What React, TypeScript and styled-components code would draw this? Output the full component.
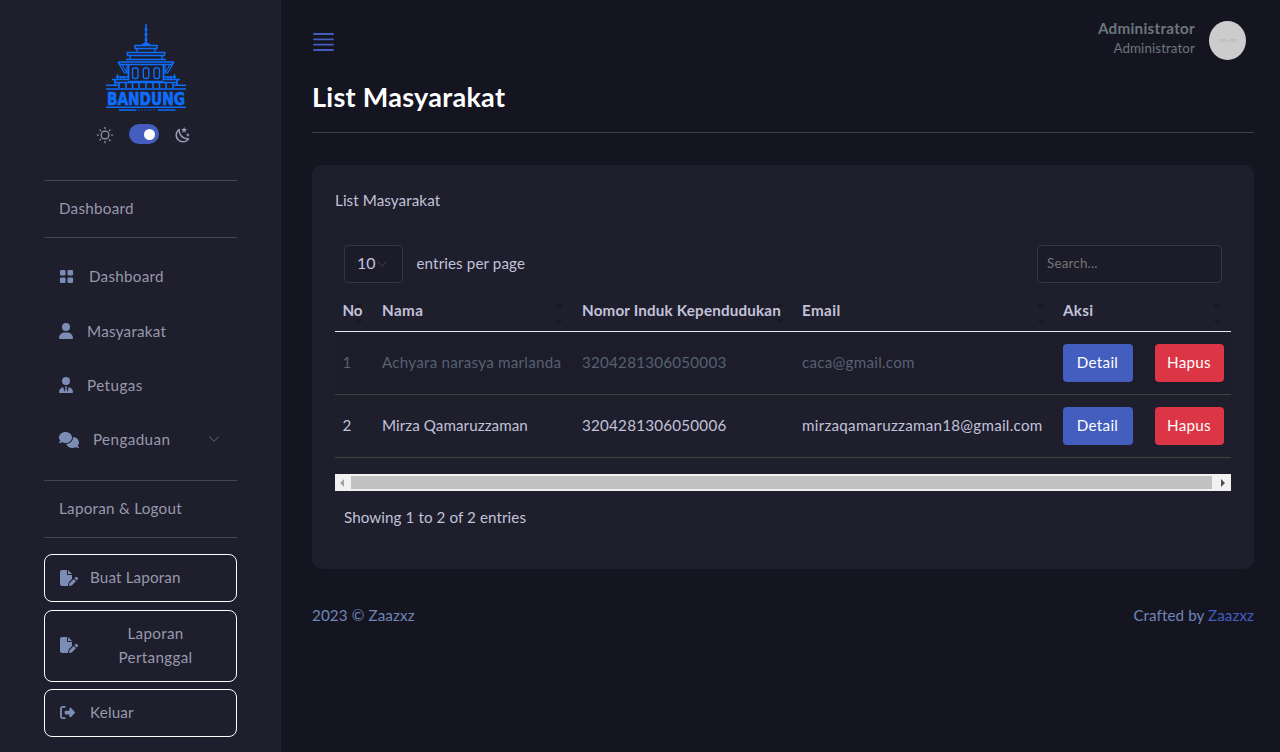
import React from "react";
import styled, { createGlobalStyle } from "styled-components";
import { BsGridFill, BsChevronDown } from "react-icons/bs";
import { FaUser, FaUserTie, FaComments, FaFilePen, FaRightFromBracket } from "react-icons/fa6";

const Global = createGlobalStyle`
  *, *::before, *::after { box-sizing: border-box; }
  html, body { margin: 0; height: 100%; background: #151521; overflow: hidden; }
  body { font-family: Lato, "Noto Sans", sans-serif; font-size: 15.2px; line-height: 24px; color: #c2c2d9; }
  button, input { font-family: inherit; }
`;

const Page = styled.div`
  display: flex;
  height: 752px;
`;

const Sidebar = styled.aside`
  width: 281px;
  flex: none;
  background: #1e1e2d;
  padding: 24px 44px 0;
  display: flex;
  flex-direction: column;
`;

const Brand = styled.div`
  height: 88px;
  padding-left: 62px;
  svg { display: block; overflow: visible; }
`;

const ThemeRow = styled.div`
  display: flex;
  align-items: center;
  height: 20px;
  margin: 12px 0 36px;
  padding-left: 52px;
  color: #9a9ab0;
  svg { display: block; margin-top: 2px; }
`;

const Switch = styled.span`
  width: 30px;
  height: 20px;
  border-radius: 10px;
  background: #435ebe;
  margin: 0 15px;
  display: flex;
  align-items: center;
  justify-content: flex-end;
  padding: 0 4px;
  &::after {
    content: "";
    width: 11px;
    height: 11px;
    border-radius: 50%;
    background: #fff;
  }
`;

const Txt = styled.span<{ $ls?: number }>`
  letter-spacing: ${(p) => (p.$ls ?? 0) - 0.1}px;
  margin-bottom: 2px;
  white-space: nowrap;
`;

const Section = styled.div`
  height: 58px;
  border-top: 1px solid #45454f;
  border-bottom: 1px solid #45454f;
  padding: 0 15px;
  display: flex;
  align-items: center;
  color: #9899ac;
`;

const Menu = styled.nav`
  padding: 12px 0 13px;
  height: 242px;
`;

const Glyph = styled.span<{ $w: number; $h: number }>`
  display: flex;
  flex: none;
  margin-bottom: 1px;
  color: #7c8db5;
  svg { width: ${(p) => p.$w}px; height: ${(p) => p.$h}px; }
`;

const Item = styled.a<{ $gap: number }>`
  display: flex;
  align-items: center;
  height: 54.4px;
  padding: 0 17px 0 15px;
  gap: ${(p) => p.$gap}px;
  color: #9899ac;
  > svg { color: #686a78; margin: 0 0 2px auto; }
`;

const Boxed = styled.button<{ $h: number; $wide?: boolean }>`
  height: ${(p) => p.$h}px;
  width: 100%;
  border: 1px solid #fff;
  border-radius: 8px;
  background: transparent;
  color: #9899ac;
  font-size: 15.2px;
  line-height: 24px;
  display: flex;
  align-items: center;
  padding: 0 15px 0 14.5px;
  flex: none;
  gap: 12.5px;
  > ${Txt} { flex: ${(p) => (p.$wide ? "1" : "none")}; text-align: center; }
`;

const Actions = styled.div`
  padding-top: 16px;
  display: flex;
  flex-direction: column;
  gap: 7.5px;
`;

const Main = styled.main`
  flex: 1;
  padding: 0 26px 0 31px;
`;

const Top = styled.header`
  height: 80px;
  display: flex;
  align-items: center;
  padding-right: 8px;
`;

const Burger = styled.div`
  margin: 4px auto 0 1px;
  svg { display: block; }
`;

const Who = styled.div`
  text-align: right;
  margin-right: 14px;
  padding-bottom: 4px;
  color: #6c757d;
  b, small { display: block; }
  b { font-size: 15.2px; line-height: 20px; font-weight: 700; letter-spacing: 0.28px; }
  small { font-size: 13.4px; line-height: 21px; letter-spacing: 0.08px; }
`;

const Avatar = styled.div`
  width: 37px;
  height: 39px;
  border-radius: 50%;
  background: #ccc;
  color: #b4b4b4;
  font-size: 4px;
  font-weight: 700;
  line-height: 40px;
  text-align: center;
`;

const Title = styled.h3`
  margin: 0;
  height: 53px;
  border-bottom: 1px solid #3d3d48;
  color: #fff;
  font-size: 27px;
  font-weight: 700;
  line-height: 34px;
`;

const Card = styled.section`
  margin-top: 32px;
  height: 404px;
  background: #1e1e2d;
  border-radius: 10px;
  padding: 23px 23px 0;
`;

const Controls = styled.div`
  display: flex;
  align-items: center;
  margin-top: 33px;
  padding: 0 9px;
  height: 38px;
`;

const Select = styled.div`
  width: 59px;
  height: 38px;
  border: 1px solid #35354f;
  border-radius: 4px;
  background: #1b1b29;
  padding-left: 12px;
  display: flex;
  align-items: center;
  font-size: 16px;
  margin-right: 13.5px;
  svg { margin-left: 1px; color: #3d444c; }
`;

const Search = styled.input`
  margin-left: auto;
  width: 185px;
  height: 38px;
  border: 1px solid #35354f;
  border-radius: 4px;
  background: #1b1b29;
  padding: 0 9px 2px;
  font-size: 13.4px;
  letter-spacing: 0.2px;
  &::placeholder { color: #757575; opacity: 1; }
`;

const Table = styled.table`
  width: 896px;
  margin-top: 8px;
  border-collapse: separate;
  border-spacing: 0;
  table-layout: fixed;
`;

const Th = styled.th<{ $w: number }>`
  width: ${(p) => p.$w}px;
  height: 41px;
  padding: 0 0 0 8px;
  border-bottom: 1px solid #e6e6ee;
  text-align: left;
  font-weight: 700;
  &:first-child { padding-left: 7.5px; }
`;

const Head = styled.div`
  display: flex;
  align-items: center;
  justify-content: space-between;
  white-space: nowrap;
`;

const Sort = styled.i`
  width: 7px;
  height: 20px;
  margin: 4px 11px 0 -7px;
  display: flex;
  flex-direction: column;
  justify-content: space-between;
  &::before, &::after { content: ""; border: 3.5px solid transparent; }
  &::before { border-top: 0; border-bottom: 4px solid #181823; }
  &::after { border-bottom: 0; border-top: 4px solid #181823; }
`;

const Row = styled.tr<{ $odd?: boolean }>`
  background: ${(p) => (p.$odd ? "#1c1c2a" : "transparent")};
  color: ${(p) => (p.$odd ? "#566171" : "#c2c2d9")};
  td { height: 63px; padding: 0 0 2px 8px; border-bottom: 1px solid #42423f; white-space: nowrap; }
  td:first-child { padding-left: 7.5px; }
  td:last-child { padding-bottom: 0; }
`;

const Buttons = styled.div`
  display: flex;
  gap: 22px;
`;

const Btn = styled.button<{ $danger?: boolean }>`
  width: ${(p) => (p.$danger ? 69 : 70)}px;
  height: 38px;
  padding: 0 1px 2px 0;
  border: 0;
  border-radius: 4px;
  background: ${(p) => (p.$danger ? "#dc3545" : "#435ebe")};
  color: #fff;
  font-size: 15.2px;
  letter-spacing: 0.3px;
`;

const Scroll = styled.div`
  margin-top: 16px;
  height: 17px;
  background: #f1f1f1;
  display: flex;
  align-items: center;
  padding-left: 5px;
`;

const Thumb = styled.div`
  width: 861px;
  height: 13px;
  margin: 0 9px 0 7px;
  background: #c1c1c1;
`;

const Arrow = styled.i<{ $right?: boolean }>`
  border: 4px solid transparent;
  ${(p) => (p.$right ? "border-right: 0; border-left-color: #505050;" : "border-left: 0; border-right-color: #a3a3a3;")}
`;

const Info = styled.div`
  padding: 14px 9px 0;
`;

const Footer = styled.footer`
  margin-top: 34px;
  display: flex;
  justify-content: space-between;
  color: #7185b8;
  a { color: #435ebe; }
`;

const Logo = () => (
  <svg width="80" height="88" viewBox="0 0 80 88" fill="none" stroke="#0d6efd" strokeWidth="1.4">
    <path d="M40 0v21" strokeWidth="1.500" />
    <path d="M40 4v3M40 9v3M40 14v3" strokeWidth="2.600" />
    <path d="M40 18l-5 3h10z" fill="#0d6efd" strokeWidth=".5" />
    <path d="M28 21.500h24M29 21.500v3h22v-3M31 24v4M49 24v4" />
    <path d="M20.500 28.500h39M21.500 28.500v3h37v-3M24 31v5M56 31v5" />
    <path d="M12 38h56M20 35.500h40M12 38l2 2.500h52l2-2.500" strokeWidth="1.500" />
    <path d="M13 40l5.500 9h2.500V41M67 40l-5.500 9H59V41M16 41l4.500 7M64 41l-4.500 7" strokeWidth="1.200" />
    <path d="M22.500 41v15M57.500 41v15" strokeWidth="1.800" />
    <rect x="26.500" y="44" width="5.500" height="10.500" rx="2" />
    <rect x="37.300" y="44" width="5.500" height="10.500" rx="2" />
    <rect x="48" y="44" width="5.500" height="10.500" rx="2" />
    <path d="M11.500 50v5M15 52v3M18 52v3M68.500 50v5M65 52v3M62 52v3M10 53h12M58 53h12" />
    <path d="M6 55.500h16M58 55.500h16M9 56v5M71 56v5M22 57.500h36" strokeWidth="1.700" />
    <path d="M0 61.200h12M68 61.200h12M0 65h80" strokeWidth="1.600" />
    <path d="M9 58.500h62" />
    <path d="M13 59v5M20 59v5M26.500 59v5M33 59v5M40 59v5M47 59v5M53.500 59v5M60 59v5M67 59v5" strokeWidth="1.600" />
    <text x="1" y="80.600" textLength="78" lengthAdjust="spacingAndGlyphs" fill="#0d6efd" strokeWidth=".7" fontFamily="'DejaVu Sans', sans-serif" fontWeight="700" fontSize="17.300">BANDUNG</text>
    <path d="M0 83.300h80" strokeWidth="1.600" />
    <path d="M13 86h17.500M52 86h17.500" />
    <path d="M32 86h18" strokeDasharray="2 1" strokeWidth="1" opacity=".6" />
  </svg>
);

const Sun = () => (
  <svg width="18" height="18" viewBox="0 0 21 21" fill="none" stroke="currentColor" strokeWidth="1.400" strokeLinecap="round" strokeLinejoin="round">
    <g transform="translate(-210 -1)">
      <path d="M220.5 2.500v1.500m6 1.500l-1 1" />
      <circle cx="220.500" cy="11.500" r="4.500" />
      <path d="m214.500 5.500l1 1m5 14v-1.500m6-1l-1-1M214.500 17.500l1-1m-4-5h1.500m15 0h1.500" />
    </g>
  </svg>
);

const Moon = () => (
  <svg width="18" height="18" viewBox="0 0 24 24" fill="currentColor">
    <path d="m17.75 4.09l-2.53 1.94l.91 3.06l-2.63-1.81l-2.63 1.81l.91-3.06l-2.53-1.94L12.44 4l1.06-3l1.06 3l3.19.09m3.5 6.91l-1.64 1.25l.59 1.98l-1.7-1.17l-1.7 1.17l.59-1.98L15.75 11l2.06-.05L18.5 9l.69 1.95l2.06.05m-2.28 4.95c.83-.08 1.72 1.1 1.19 1.85c-.32.45-.66.87-1.08 1.27C15.17 23 8.84 23 4.94 19.07c-3.91-3.9-3.91-10.24 0-14.14c.4-.4.82-.76 1.27-1.08c.75-.53 1.93.36 1.85 1.19c-.27 2.86.69 5.83 2.89 8.02a9.96 9.96 0 0 0 8.02 2.89m-1.64 2.02a12.08 12.08 0 0 1-7.8-3.47c-2.17-2.19-3.33-5-3.49-7.82c-2.81 3.14-2.7 7.96.31 10.98c3.02 3.01 7.84 3.12 10.98.31Z" />
  </svg>
);

const columns = [
  { label: "No", w: 39, ls: 0 },
  { label: "Nama", w: 200, ls: 0.5 },
  { label: "Nomor Induk Kependudukan", w: 220, ls: 0.28 },
  { label: "Email", w: 261, ls: 0.5 },
  { label: "Aksi", w: 176, ls: 0.4 },
];

const people = [
  { name: "Achyara narasya marlanda", nik: "3204281306050003", mail: "caca@gmail.com", ls: 0.34 },
  { name: "Mirza Qamaruzzaman", nik: "3204281306050006", mail: "mirzaqamaruzzaman18@gmail.com", ls: 0.16 },
];

export default function App() {
  return (
    <>
      <Global />
      <Page>
        <Sidebar>
          <Brand><Logo /></Brand>
          <ThemeRow><Sun /><Switch /><Moon /></ThemeRow>
          <Section><Txt $ls={0.37}>Dashboard</Txt></Section>
          <Menu>
            <Item $gap={15}><Glyph $w={15} $h={15}><BsGridFill /></Glyph><Txt $ls={0.37}>Dashboard</Txt></Item>
            <Item $gap={14}><Glyph $w={14} $h={16}><FaUser /></Glyph><Txt $ls={0.36}>Masyarakat</Txt></Item>
            <Item $gap={14}><Glyph $w={14} $h={16}><FaUserTie /></Glyph><Txt $ls={0.55}>Petugas</Txt></Item>
            <Item $gap={14}>
              <Glyph $w={20} $h={16}><FaComments /></Glyph>
              <Txt $ls={0.5}>Pengaduan</Txt>
              <BsChevronDown size={12} />
            </Item>
          </Menu>
          <Section><Txt $ls={0.37}>Laporan &amp; Logout</Txt></Section>
          <Actions>
            <Boxed $h={48}><Glyph $w={18} $h={16}><FaFilePen /></Glyph><Txt $ls={0.25}>Buat Laporan</Txt></Boxed>
            <Boxed $h={72} $wide><Glyph $w={18} $h={16}><FaFilePen /></Glyph><Txt $ls={0.42}>Laporan<br />Pertanggal</Txt></Boxed>
            <Boxed $h={48}><Glyph $w={18} $h={15}><FaRightFromBracket preserveAspectRatio="xMinYMid meet" /></Glyph><Txt $ls={0.3}>Keluar</Txt></Boxed>
          </Actions>
        </Sidebar>
        <Main>
          <Top>
            <Burger>
              <svg width="21" height="18" viewBox="0 0 21 18" stroke="#435ebe" strokeWidth="1.800" strokeLinecap="round">
                <path d="M1 1h19M1 6.300h19M1 11.700h19M1 17h19" />
              </svg>
            </Burger>
            <Who><b>Administrator</b><small>Administrator</small></Who>
            <Avatar>100 x 100</Avatar>
          </Top>
          <Title><Txt $ls={0.38}>List Masyarakat</Txt></Title>
          <Card>
            <Txt $ls={0.18}>List Masyarakat</Txt>
            <Controls>
              <Select><Txt>10</Txt><BsChevronDown size={12} /></Select>
              <Txt $ls={0.2}>entries per page</Txt>
              <Search placeholder="Search..." />
            </Controls>
            <Table>
              <thead>
                <tr>
                  {columns.map((c) => (
                    <Th key={c.label} $w={c.w}><Head><Txt $ls={c.ls}>{c.label}</Txt><Sort /></Head></Th>
                  ))}
                </tr>
              </thead>
              <tbody>
                {people.map((p, i) => (
                  <Row key={p.nik} $odd={i === 0}>
                    <td>{i + 1}</td>
                    <td><Txt $ls={p.ls}>{p.name}</Txt></td>
                    <td><Txt $ls={0.32}>{p.nik}</Txt></td>
                    <td><Txt $ls={0.35}>{p.mail}</Txt></td>
                    <td><Buttons><Btn>Detail</Btn><Btn $danger>Hapus</Btn></Buttons></td>
                  </Row>
                ))}
              </tbody>
            </Table>
            <Scroll><Arrow /><Thumb /><Arrow $right /></Scroll>
            <Info><Txt $ls={0.18}>Showing 1 to 2 of 2 entries</Txt></Info>
          </Card>
          <Footer><Txt $ls={0.22}>2023 © Zaazxz</Txt><Txt $ls={0.18}>Crafted by <a>Zaazxz</a></Txt></Footer>
        </Main>
      </Page>
    </>
  );
}
